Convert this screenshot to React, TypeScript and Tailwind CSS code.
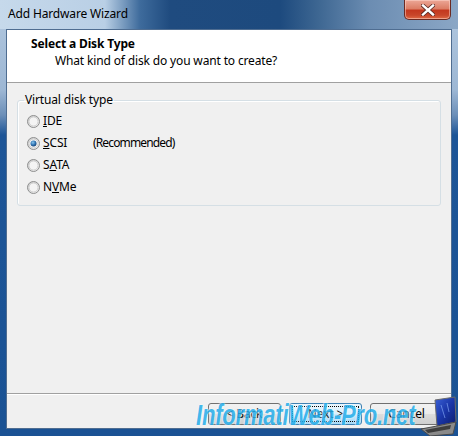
import React from "react";

function Radio({ checked }: { checked?: boolean }) {
  return (
    <svg width="13" height="13" viewBox="0 0 13 13" className="shrink-0">
      <defs>
        <linearGradient id="rg" x1="0" y1="0" x2="1" y2="1">
          <stop offset="0" stopColor="#c8c8c8" />
          <stop offset="1" stopColor="#f6f6f6" />
        </linearGradient>
        <radialGradient id="dot" cx="0.4" cy="0.35" r="0.7">
          <stop offset="0" stopColor="#8ac6ef" />
          <stop offset="0.6" stopColor="#2b6fae" />
          <stop offset="1" stopColor="#1b3f6b" />
        </radialGradient>
      </defs>
      <circle cx="6.5" cy="6.5" r="6" fill="url(#rg)" stroke="#8e8f8f" strokeWidth="1" />
      <circle cx="6.5" cy="6.5" r="4.5" fill="#f4f4f4" stroke="#c9c9c9" strokeWidth="0.8" />
      {checked && <circle cx="6.5" cy="6.5" r="3" fill="url(#dot)" />}
    </svg>
  );
}

function Btn({ children, def }: { children: React.ReactNode; def?: boolean }) {
  return (
    <div
      className={
        "w-[73px] h-[22px] rounded-[3px] border flex items-center justify-center text-[12px] text-black relative " +
        (def
          ? "border-[#3c7fb1] bg-[linear-gradient(180deg,#eaf6fd_0%,#d9f0fc_50%,#bee6fd_50%,#a7d9f5_100%)]"
          : "border-[#707070] bg-[linear-gradient(180deg,#f2f2f2_0%,#ebebeb_50%,#dddddd_50%,#cfcfcf_100%)]")
      }
    >
      {def && (
        <div className="absolute inset-[2px] border border-dotted border-black rounded-[1px]" />
      )}
      <span className="relative">{children}</span>
    </div>
  );
}

export default function App() {
  const items: { label: React.ReactNode; checked?: boolean; extra?: string }[] = [
    { label: <><span className="underline">I</span>DE</> },
    { label: <><span className="underline">S</span>CSI</>, checked: true, extra: "(Recommended)" },
    { label: <>S<span className="underline">A</span>TA</> },
    { label: <>N<span className="underline">V</span>Me</> },
  ];
  return (
    <div className="w-[458px] h-[436px] relative overflow-hidden flex flex-col bg-[linear-gradient(180deg,#b3c9e0_0px,#9db7d4_90px,#6c8fb8_115px,#1d5597_135px,#1a5294_436px)] font-['Segoe_UI','Noto_Sans',sans-serif] tracking-[-0.15px]">
      {/* title bar */}
      <div className="h-[29px] shrink-0 relative bg-[linear-gradient(90deg,#c6d9eb_0px,#b9cfe5_105px,#3e6b9c_140px,#1f4b7f_170px,#1d4a7e_280px,#3f6893_320px,#6c8db2_370px,#8ba7c6_458px)]">
        <div className="absolute left-[8px] top-[6px] text-[12px] leading-[16px] text-black">
          Add Hardware Wizard
        </div>
        <div className="absolute top-0 right-[7px] w-[47px] h-[20px] rounded-b-[5px] border border-t-0 border-[#6b2a22] bg-[linear-gradient(180deg,#eca797_0%,#dc7e66_45%,#c4381f_55%,#c8462a_80%,#e06a45_100%)] flex items-center justify-center shadow-[inset_0_0_0_1px_rgba(255,220,210,0.5)]">
          <svg width="14" height="12" viewBox="0 0 14 12">
            <path d="M2 1.5 L12 10.5 M12 1.5 L2 10.5" stroke="#5a2a24" strokeWidth="4" strokeLinecap="square" />
            <path d="M2 1.5 L12 10.5 M12 1.5 L2 10.5" stroke="#ffffff" strokeWidth="2.4" strokeLinecap="square" />
          </svg>
        </div>
      </div>

      {/* client area */}
      <div className="flex-1 mx-[6px] mb-[7px] border border-[#4f6d91] bg-[#f0f0f0] flex flex-col text-[12px] text-black">
        <div className="h-[53px] shrink-0 bg-white border-b border-[#a0a0a0] flex flex-col">
          <div className="pl-[24px] pt-[6px] font-bold leading-[16px]">Select a Disk Type</div>
          <div className="pl-[48px] pt-[1px] leading-[16px]">What kind of disk do you want to create?</div>
        </div>

        <div className="flex-1 flex flex-col">
          <fieldset className="mt-[9px] mx-[10px] h-[114px] border border-[#d5dfe5] rounded-[3px] shadow-[inset_1px_1px_0_#ffffff] pl-0 pt-[2px]">
            <legend className="ml-[6px] px-[1px] leading-[16px]">Virtual disk type</legend>
            {items.map((it, i) => (
              <div key={i} className="h-[22px] flex items-center gap-[3px] pl-[9px]">
                <Radio checked={it.checked} />
                <span className="w-[47px] leading-[16px]">{it.label}</span>
                {it.extra && (
                  <span className="leading-[16px] text-[12px] tracking-[-0.85px]">{it.extra}</span>
                )}
              </div>
            ))}
          </fieldset>
        </div>

        <div className="h-[35px] shrink-0 border-t border-[#a0a0a0] shadow-[inset_0_1px_0_#ffffff] flex items-start justify-end gap-[8px] pr-[8px] pt-[9px]">
          <Btn>&lt; Back</Btn>
          <Btn def>Next &gt;</Btn>
          <Btn>Cancel</Btn>
        </div>
      </div>

      {/* watermark */}
      <div className="absolute left-[196px] top-[399px] text-[22px] leading-[26px] italic font-bold font-['Liberation_Sans',Arial,sans-serif] text-[#27aeea] opacity-[0.85] [text-shadow:0_0_2px_#ffffff,0_0_1px_#ffffff] origin-top-left scale-y-[1.3] tracking-[-0.2px]">
        InformatiWeb-Pro.net
      </div>
      <svg className="absolute right-[1px] bottom-[0px]" width="36" height="40" viewBox="0 0 36 40">
        <defs>
          <linearGradient id="scr" x1="0" y1="0" x2="1" y2="1">
            <stop offset="0" stopColor="#3b62d8" />
            <stop offset="0.5" stopColor="#1a36a8" />
            <stop offset="1" stopColor="#0c1d6e" />
          </linearGradient>
        </defs>
        <path d="M14 4 L34 1 L35 26 L16 30 Z" fill="url(#scr)" stroke="#6b6b6b" strokeWidth="1" />
        <path d="M20 9 L24 22 M26 7 L28 16" stroke="#8fb4ff" strokeWidth="1" opacity="0.6" />
        <path d="M0 33 L16 30 L35 26 L32 38 L9 40 Z" fill="#8a8a8a" stroke="#4a4a4a" strokeWidth="1" />
        <path d="M4 34 L30 29 L29 33 L7 37 Z" fill="#3e3e3e" />
      </svg>
    </div>
  );
}
